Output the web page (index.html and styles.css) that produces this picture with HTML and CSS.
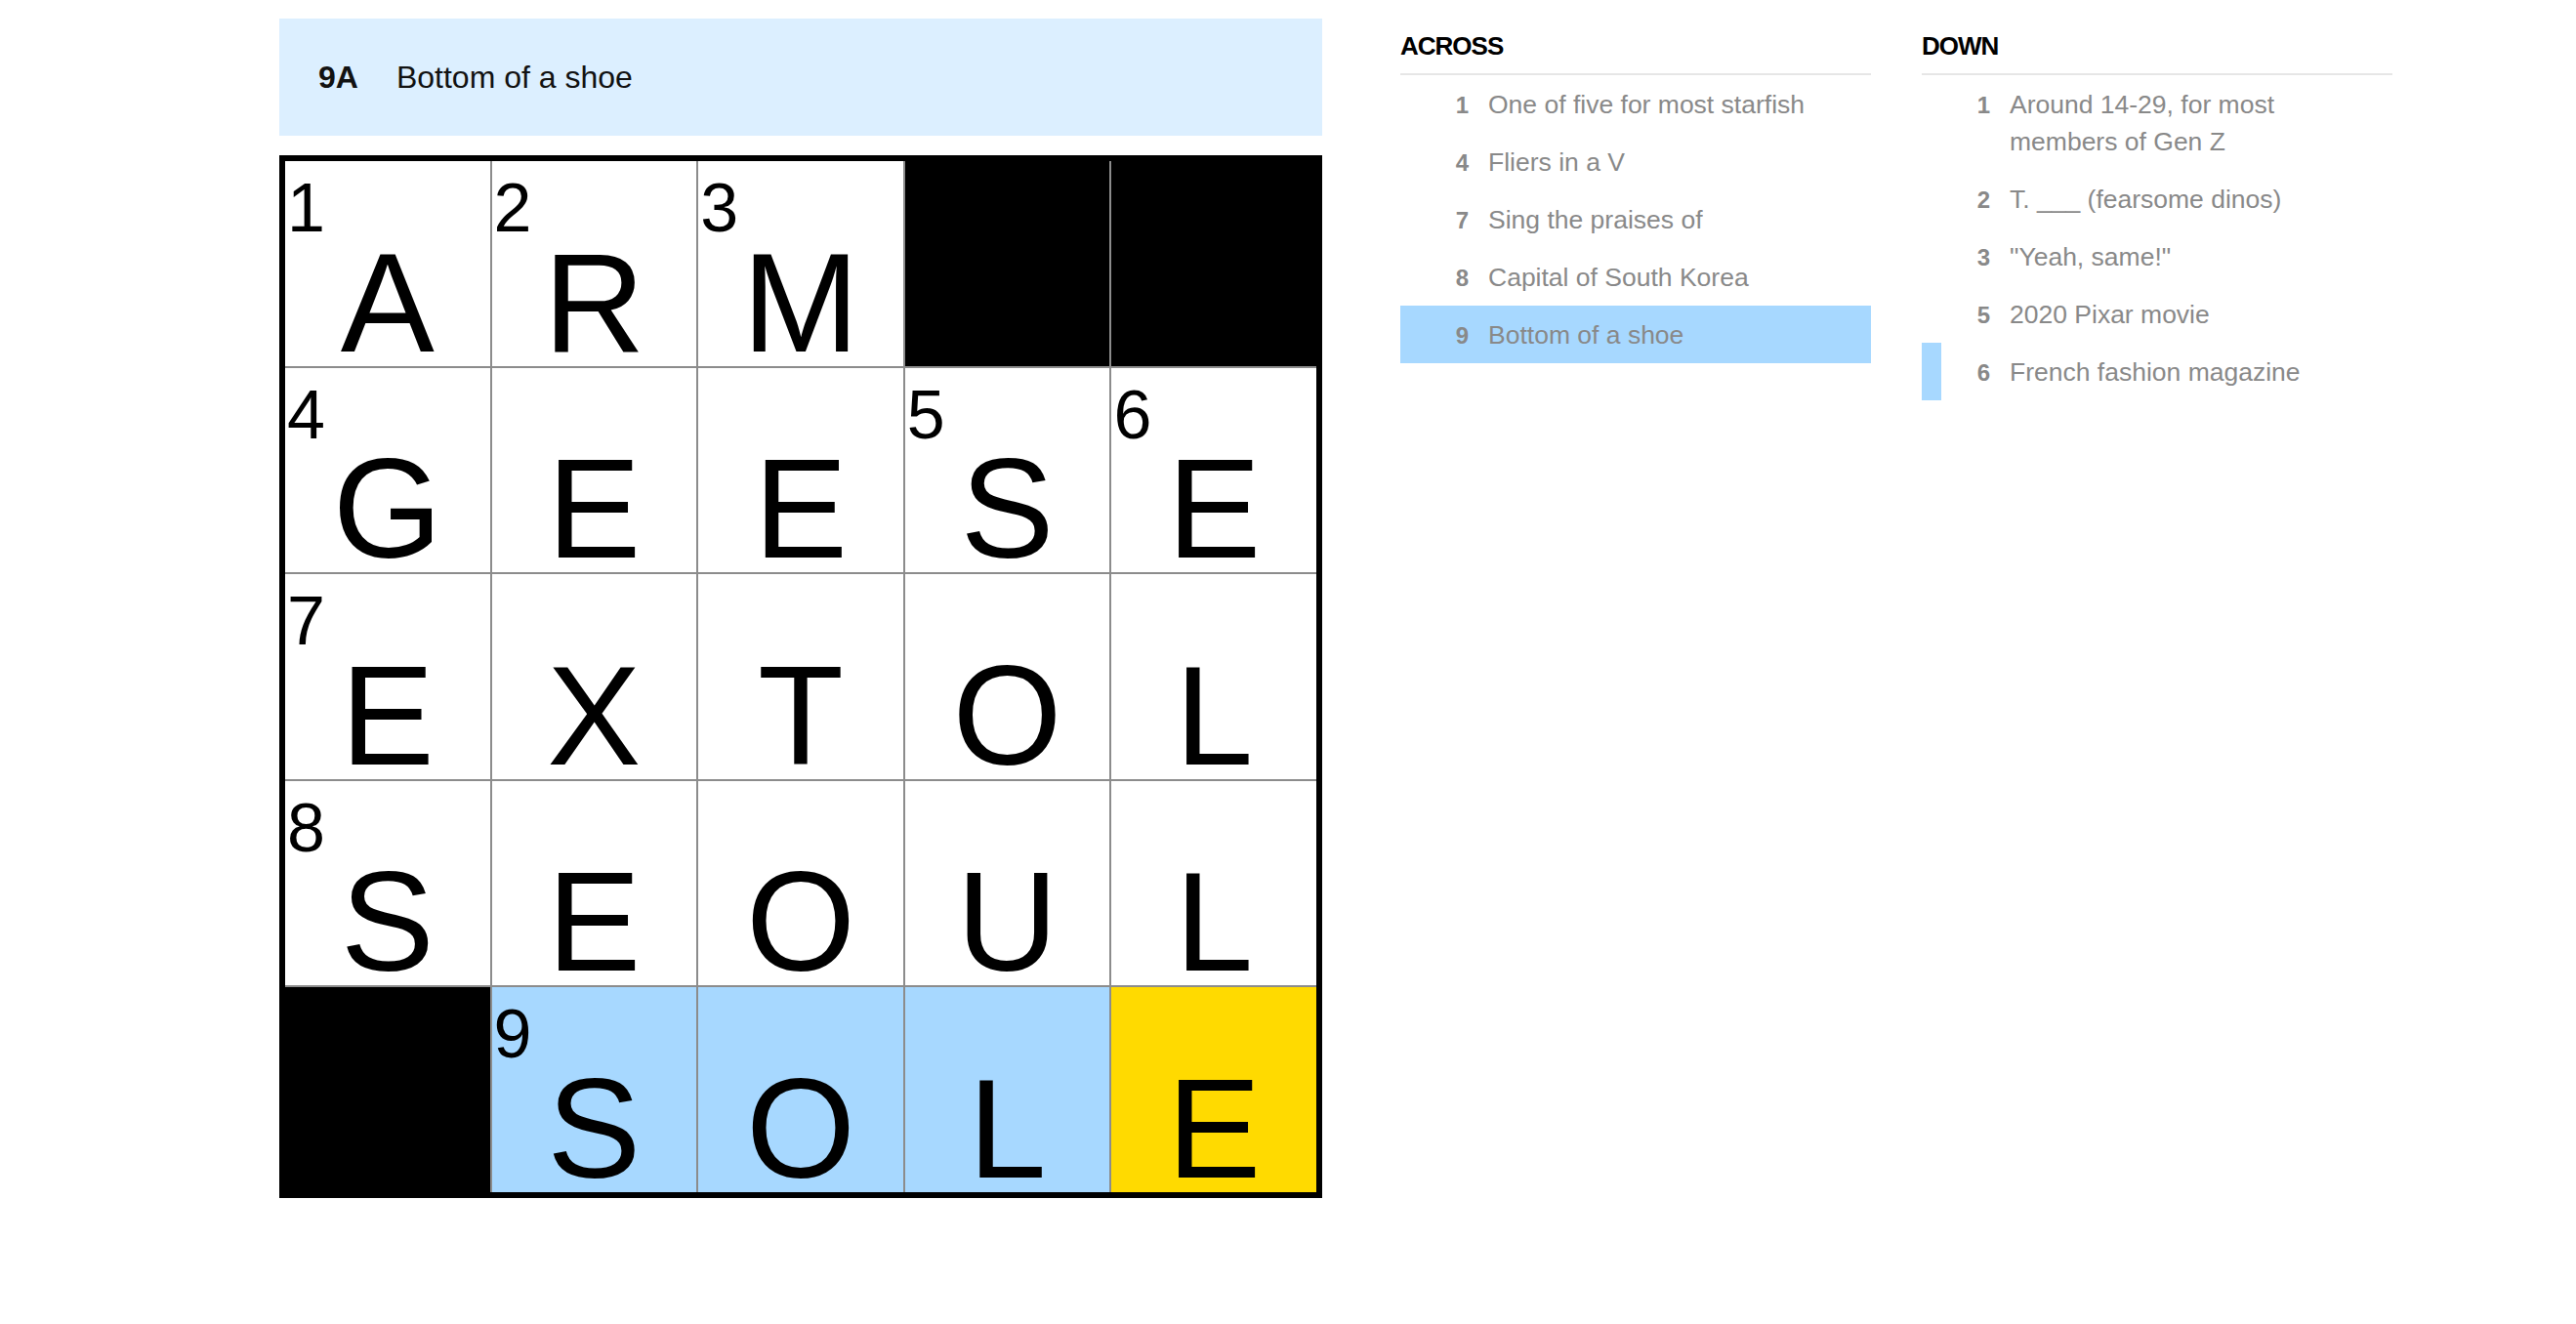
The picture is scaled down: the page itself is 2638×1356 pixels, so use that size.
FILE: index.html
```html
<!DOCTYPE html>
<html lang="en">
<head>
  <meta charset="UTF-8" />
  <meta name="viewport" content="width=device-width, initial-scale=1.0"/>
  <title>The Mini Crossword</title>
  <link rel="stylesheet" href="styles.css">
</head>
<body>

<div class="page">
  <div class="board">
    <div class="clue-bar">
      <span class="clue-bar-label">9A</span>
      <span class="clue-bar-text">Bottom of a shoe</span>
    </div>

    <div class="grid">
      <!-- row 1 -->
      <div class="cell"><span class="cell-num">1</span><span class="cell-letter">A</span></div>
      <div class="cell"><span class="cell-num">2</span><span class="cell-letter">R</span></div>
      <div class="cell"><span class="cell-num">3</span><span class="cell-letter">M</span></div>
      <div class="cell block"></div>
      <div class="cell block"></div>
      <!-- row 2 -->
      <div class="cell"><span class="cell-num">4</span><span class="cell-letter">G</span></div>
      <div class="cell"><span class="cell-letter">E</span></div>
      <div class="cell"><span class="cell-letter">E</span></div>
      <div class="cell"><span class="cell-num">5</span><span class="cell-letter">S</span></div>
      <div class="cell"><span class="cell-num">6</span><span class="cell-letter">E</span></div>
      <!-- row 3 -->
      <div class="cell"><span class="cell-num">7</span><span class="cell-letter">E</span></div>
      <div class="cell"><span class="cell-letter">X</span></div>
      <div class="cell"><span class="cell-letter">T</span></div>
      <div class="cell"><span class="cell-letter">O</span></div>
      <div class="cell"><span class="cell-letter">L</span></div>
      <!-- row 4 -->
      <div class="cell"><span class="cell-num">8</span><span class="cell-letter">S</span></div>
      <div class="cell"><span class="cell-letter">E</span></div>
      <div class="cell"><span class="cell-letter">O</span></div>
      <div class="cell"><span class="cell-letter">U</span></div>
      <div class="cell"><span class="cell-letter">L</span></div>
      <!-- row 5 -->
      <div class="cell block"></div>
      <div class="cell word"><span class="cell-num">9</span><span class="cell-letter">S</span></div>
      <div class="cell word"><span class="cell-letter">O</span></div>
      <div class="cell word"><span class="cell-letter">L</span></div>
      <div class="cell selected"><span class="cell-letter">E</span></div>
    </div>
  </div>

  <div class="clue-lists">
    <section class="clue-list">
      <h3>ACROSS</h3>
      <ol>
        <li class="clue"><span class="clue-num">1</span><span class="clue-text">One of five for most starfish</span></li>
        <li class="clue"><span class="clue-num">4</span><span class="clue-text">Fliers in a V</span></li>
        <li class="clue"><span class="clue-num">7</span><span class="clue-text">Sing the praises of</span></li>
        <li class="clue"><span class="clue-num">8</span><span class="clue-text">Capital of South Korea</span></li>
        <li class="clue active"><span class="clue-num">9</span><span class="clue-text">Bottom of a shoe</span></li>
      </ol>
    </section>

    <section class="clue-list">
      <h3>DOWN</h3>
      <ol>
        <li class="clue"><span class="clue-num">1</span><span class="clue-text">Around 14-29, for most members of Gen Z</span></li>
        <li class="clue"><span class="clue-num">2</span><span class="clue-text">T. ___ (fearsome dinos)</span></li>
        <li class="clue"><span class="clue-num">3</span><span class="clue-text">"Yeah, same!"</span></li>
        <li class="clue"><span class="clue-num">5</span><span class="clue-text">2020 Pixar movie</span></li>
        <li class="clue related"><span class="clue-num">6</span><span class="clue-text">French fashion magazine</span></li>
      </ol>
    </section>
  </div>
</div>

</body>
</html>
```

FILE: styles.css
```css
body {
  margin: 0;
  font-family: "Liberation Sans", Arial, sans-serif;
  color: #121212;
  background: #fff;
}
.page {
  display: flex;
  align-items: flex-start;
  gap: 80px;
  padding: 19px 0 0 286px;
}

/* left side: current clue + grid */
.board {
  width: 1068px;
  display: flex;
  flex-direction: column;
  gap: 20px;
}
.clue-bar {
  height: 120px;
  background: #dcefff;
  display: flex;
  align-items: center;
  padding-left: 40px;
  font-size: 32px;
}
.clue-bar-label {
  font-weight: bold;
  margin-right: 39px;
}
.grid {
  width: 1068px;
  height: 1068px;
  box-sizing: border-box;
  border: 6px solid #000;
  background: #8c8c8c;
  display: grid;
  grid-template-columns: repeat(5, 1fr);
  grid-template-rows: repeat(5, 1fr);
  gap: 2px;
  color: #000;
}
.cell {
  position: relative;
  background: #fff;
  display: flex;
  align-items: flex-end;
  justify-content: center;
}
.cell.block {
  background: #000;
}
.cell.word {
  background: #a7d8ff;
}
.cell.selected {
  background: #ffda00;
}
.cell-num {
  position: absolute;
  top: 13px;
  left: 2px;
  font-size: 70px;
  line-height: 70px;
}
.cell-letter {
  font-size: 144px;
  line-height: 129px;
}

/* right side: clue lists */
.clue-lists {
  display: flex;
  gap: 52px;
  padding-top: 13px;
}
.clue-list {
  width: 482px;
}
.clue-list h3 {
  margin: 0;
  font-size: 26px;
  line-height: 30px;
  letter-spacing: -1px;
  color: #000;
  padding-bottom: 13px;
  border-bottom: 2px solid #e6e6e6;
}
.clue-list ol {
  list-style: none;
  margin: 0;
  padding: 0;
}
.clue {
  display: flex;
  align-items: flex-start;
  border-left: 20px solid transparent;
  padding: 10.5px 30px 10.5px 0;
  font-size: 26.5px;
  line-height: 38px;
  color: #898989;
}
.clue-num {
  flex: none;
  width: 50px;
  margin: 2px 20px 0 0;
  text-align: right;
  font-weight: bold;
  font-size: 24px;
  line-height: 36px;
}
.clue.active {
  background: #a7d8ff;
}
.clue.related {
  border-left-color: #a7d8ff;
}
```
